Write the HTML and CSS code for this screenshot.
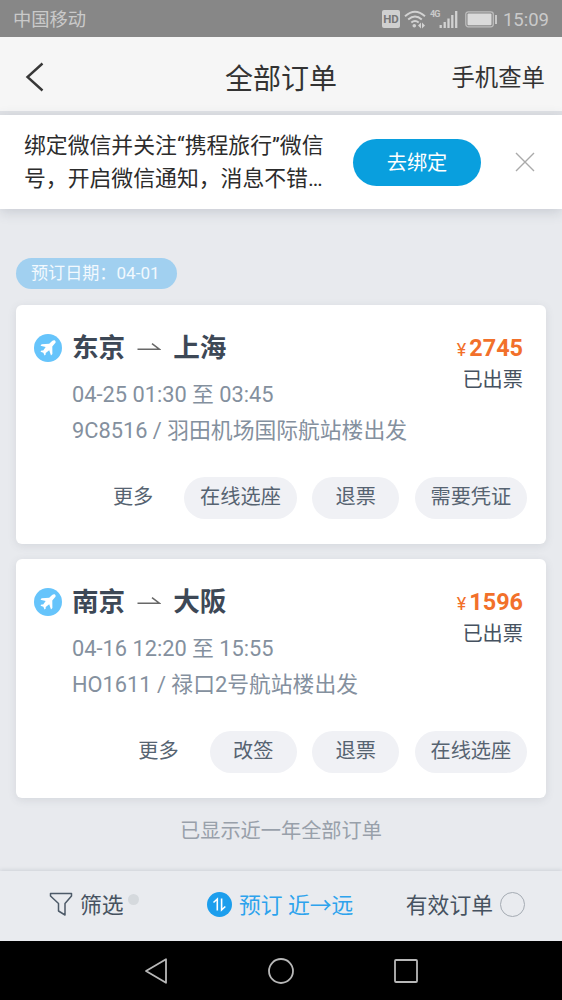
FILE: index.html
```html
<!DOCTYPE html>
<html lang="zh-CN">
<head>
<meta charset="utf-8">
<title>全部订单</title>
<link rel="stylesheet" href="styles.css">
</head>
<body>
<svg class="defs" width="0" height="0">
  <symbol id="plane" viewBox="0 0 28 28">
    <circle cx="14" cy="14" r="14" fill="#66c4fb"/>
    <path d="M21.200 6.700c.8.9.5 2-.4 2.900L18.300 12.400 18.400 20 17 21.500 15.200 16.200 11.700 19 11.600 20.700 10.500 21.500 9.400 18.700 6.500 17.700 7.400 16.500 9.200 16.400 11.700 13.100 6.500 11.700 7.600 10.200 15.200 9.700 18.100 7.100c.9-.8 2.200-1.200 3.100-.4z" fill="#fff"/>
  </symbol>
  <symbol id="arrow" viewBox="0 0 24 12">
    <path d="M.5 8.200H22.300L15 2.600" fill="none" stroke="#686868" stroke-width="1.500"/>
  </symbol>
</svg>
<div class="status">
  <span class="carrier">中国移动</span>
  <div class="indicators">
    <span class="hd">HD</span>
    <svg class="wifi" width="22" height="19" viewBox="0 0 22 19"><g fill="none" stroke="#d2d2d2" stroke-width="1.900"><path d="M1 6.300Q11-2.800 21 6.300M4.200 9.500Q11 3.400 17.800 9.500M7.300 12.600Q11 9.500 14.700 12.600"/></g><circle cx="10.300" cy="15.800" r="1.800" fill="#d2d2d2"/><path d="M17 12.500v6l-3-3zM18 12.500v6l3-3z" fill="#d2d2d2"/></svg>
    <span class="net">4G</span>
    <svg class="bars" width="19" height="19" viewBox="0 0 19 19"><path d="M1.700 15v3M5.700 12v6M9.500 8.500V18M13.300 5v13M17.200 1v17" stroke="#d2d2d2" stroke-width="2.300"/></svg>
    <svg class="battery" width="33" height="17" viewBox="0 0 33 17"><rect x=".8" y=".8" width="27.500" height="15" rx="2.500" fill="none" stroke="#bdbdbd" stroke-width="1.300"/><rect x="2.500" y="2.500" width="24" height="11.700" rx="1" fill="#dadada"/><path d="M31 4v9" stroke="#c8c8c8" stroke-width="2"/></svg>
    <span class="clock">15:09</span>
  </div>
</div>
<header class="header">
  <svg class="back" width="20" height="30" viewBox="0 0 20 30"><path d="M17.500 1.500 2.500 15l15 13.500" fill="none" stroke="#383838" stroke-width="2.400"/></svg>
  <h1 class="title">全部订单</h1>
  <span class="lookup">手机查单</span>
</header>
<section class="banner">
  <p class="banner-text">绑定微信并关注“携程旅行”微信<br>号，开启微信通知，消息不错…</p>
  <span class="bind">去绑定</span>
  <svg class="close" width="20" height="20" viewBox="0 0 20 20"><path d="M1 1l18 18M19 1 1 19" stroke="#aaa" stroke-width="1.400"/></svg>
</section>
<main class="orders">
  <span class="date">预订日期：04-01</span>
  <article class="card">
    <div class="top">
      <svg class="plane"><use href="#plane"/></svg>
      <div class="trip">
        <h2 class="route">东京<svg class="arrow"><use href="#arrow"/></svg>上海</h2>
        <p class="detail">04-25 01:30 至 03:45</p>
        <p class="detail">9C8516 / 羽田机场国际航站楼出发</p>
      </div>
      <div class="side"><div class="price"><span class="yen">¥</span>2745</div><div class="state">已出票</div></div>
    </div>
    <div class="actions"><span class="more">更多</span><span class="btn">在线选座</span><span class="btn">退票</span><span class="btn">需要凭证</span></div>
  </article>
  <article class="card">
    <div class="top">
      <svg class="plane"><use href="#plane"/></svg>
      <div class="trip">
        <h2 class="route">南京<svg class="arrow"><use href="#arrow"/></svg>大阪</h2>
        <p class="detail">04-16 12:20 至 15:55</p>
        <p class="detail">HO1611 / 禄口2号航站楼出发</p>
      </div>
      <div class="side"><div class="price"><span class="yen">¥</span>1596</div><div class="state">已出票</div></div>
    </div>
    <div class="actions"><span class="more">更多</span><span class="btn">改签</span><span class="btn">退票</span><span class="btn">在线选座</span></div>
  </article>
  <p class="end">已显示近一年全部订单</p>
</main>
<footer class="filters">
  <div class="filter">
    <svg class="funnel" width="24" height="25" viewBox="0 0 24 25"><path d="M1.500 1.500H22.500V4L16 11.500V23L9.500 19V11.500L1.500 4Z" fill="none" stroke="#4d5a68" stroke-width="1.500" stroke-linejoin="round"/></svg>
    <span>筛选</span><i class="dot"></i>
  </div>
  <div class="sort">
    <svg width="25" height="25" viewBox="0 0 25 25"><circle cx="12.500" cy="12.500" r="12.500" fill="#1c9eed"/><path d="M6.500 10.500 10.300 7V18.500M14.600 6.500V18L18.300 14.500" fill="none" stroke="#fff" stroke-width="1.600"/></svg>
    <span>预订 近→远</span>
  </div>
  <div class="valid"><span>有效订单</span><i class="radio"></i></div>
</footer>
<nav class="nav">
  <svg width="24" height="28" viewBox="0 0 24 28"><path d="M22 2.200V25.800L2 14Z" fill="none" stroke="#b8b8b8" stroke-width="1.800" stroke-linejoin="round"/></svg>
  <svg width="28" height="28" viewBox="0 0 28 28"><circle cx="14" cy="14" r="12" fill="none" stroke="#b8b8b8" stroke-width="1.800"/></svg>
  <svg width="24" height="28" viewBox="0 0 24 28"><rect x="1" y="3" width="22" height="22" rx="1" fill="none" stroke="#b8b8b8" stroke-width="1.800"/></svg>
</nav>
</body>
</html>
```
FILE: styles.css
```css
* { box-sizing: border-box; margin: 0; padding: 0; }
body {
  width: 562px; height: 1000px; overflow: hidden;
  display: flex; flex-direction: column;
  background: #e8eaee; color: #333;
  font-family: Roboto, "Noto Sans CJK SC", sans-serif;
}
svg { display: block; flex: none; }
.defs { position: absolute; }
span, h1, h2, p { white-space: nowrap; }

.status {
  height: 37px; flex: none; display: flex; align-items: center; justify-content: space-between;
  padding: 2px 13px 0 13px; background: #878787; color: #cacaca;
}
.carrier { font-size: 18.300px; line-height: 36px; padding-top: 1px; }
.indicators { display: flex; align-items: center; }
.hd {
  width: 18px; height: 18px; border-radius: 2px; background: #d0d0d0; color: #777; margin-top: -1px;
  font-size: 11.500px; font-weight: 700; line-height: 18px; text-align: center;
}
.wifi { margin: -1px 0 0 4px; }
.net { font: 700 9px/10px Roboto, sans-serif; margin: -11px 0 0 4px; width: 10px; letter-spacing: -.8px; }
.bars { margin: -1px 0 0 -1px; }
.battery { margin-left: 7px; }
.clock { font-size: 18.500px; line-height: 34px; margin-left: 5px; }

.header {
  height: 74px; flex: none; display: grid; grid-template-columns: 200px 112px 1fr; align-items: center;
  padding: 5px 17px 0 25px; background: #f6f6f6;
}
.title { font-size: 28px; font-weight: 400; line-height: 40px; padding-top: 6px; }
.lookup { justify-self: end; font-size: 23.400px; line-height: 40px; padding-top: 3px; }

.banner {
  height: 94px; flex: none; margin-top: 4px; display: flex; align-items: center;
  padding: 0 27px 0 24px; background: #fff;
  box-shadow: 0 3px 12px rgba(70, 80, 100, .2), 0 -4px 0 #e0e2e6;
}
.banner-text { width: 329px; font-size: 21.850px; line-height: 33px; color: #2c2c2c; }
.bind {
  width: 128px; height: 47px; border-radius: 24px; background: #099fde; color: #fff;
  font-size: 20.200px; line-height: 48px; text-align: center;
}
.close { margin-left: auto; }

.orders { flex: 1; display: flex; flex-direction: column; align-items: flex-start; padding: 49px 16px 0; }
.date {
  height: 31px; width: 161px; border-radius: 16px; padding-left: 15px; background: #a1d0f0; color: #f2f9fe;
  font-size: 17.100px; line-height: 30px;
}
.card {
  align-self: stretch; height: 239px; margin-top: 16px; border-radius: 6px; background: #fff;
  box-shadow: 0 2px 8px rgba(70, 80, 100, .12);
}
.card + .card { margin-top: 15px; }
.top { display: flex; height: 172px; padding: 24px 23px 0 18px; }
.plane { width: 28px; height: 28px; margin: 5px 10px 0 0; }
.trip { flex: 1; }
.route { display: flex; align-items: center; height: 37px; font-size: 26.600px; line-height: 37px; font-weight: 700; color: #3d4856; }
.arrow { width: 24px; height: 12px; margin: -2px 12px 0 12px; }
.detail { font-size: 21.800px; line-height: 36px; color: #84909e; }
.route + .detail { margin-top: 11px; }
.side { text-align: right; }
.price { font-size: 23.400px; font-weight: 700; line-height: 32px; margin-top: 3px; color: #f2702a; }
.yen { font-size: 18px; font-weight: 400; margin-right: 3px; }
.state { font-size: 20.200px; line-height: 29px; color: #465260; }
.actions { display: flex; justify-content: flex-end; gap: 15.500px; padding-right: 19px; }
.actions span { height: 42px; font-size: 20.200px; line-height: 41px; color: #566371; }
.more { margin-right: 15.500px; }
.btn { min-width: 87px; padding: 0 15.800px; border-radius: 21px; background: #f0f1f5; text-align: center; }
.end { align-self: center; margin-top: 18px; font-size: 20.200px; line-height: 30px; color: #98a0aa; }

.filters {
  height: 70px; flex: none; display: flex; align-items: center; padding: 0 37px 3px 49px;
  background: #e9ebef; box-shadow: 0 -1px 4px rgba(70, 80, 100, .16);
  font-size: 21.800px; line-height: 35px; color: #465260;
}
.filters span { padding-top: 2px; }
.filter, .sort, .valid { display: flex; align-items: center; }
.filter { width: 158px; }
.funnel { margin-right: 7px; }
.dot { width: 11px; height: 11px; margin: -10px 0 0 4px; border-radius: 50%; background: #d5d9dd; }
.sort { gap: 7px; color: #2da3ed; }
.valid { margin-left: auto; gap: 7px; }
.radio { width: 25px; height: 25px; border: 1.500px solid #a5abb3; border-radius: 50%; }

.nav {
  height: 59px; flex: none; display: flex; align-items: center; justify-content: center; gap: 99px;
  background: #000;
}
```
